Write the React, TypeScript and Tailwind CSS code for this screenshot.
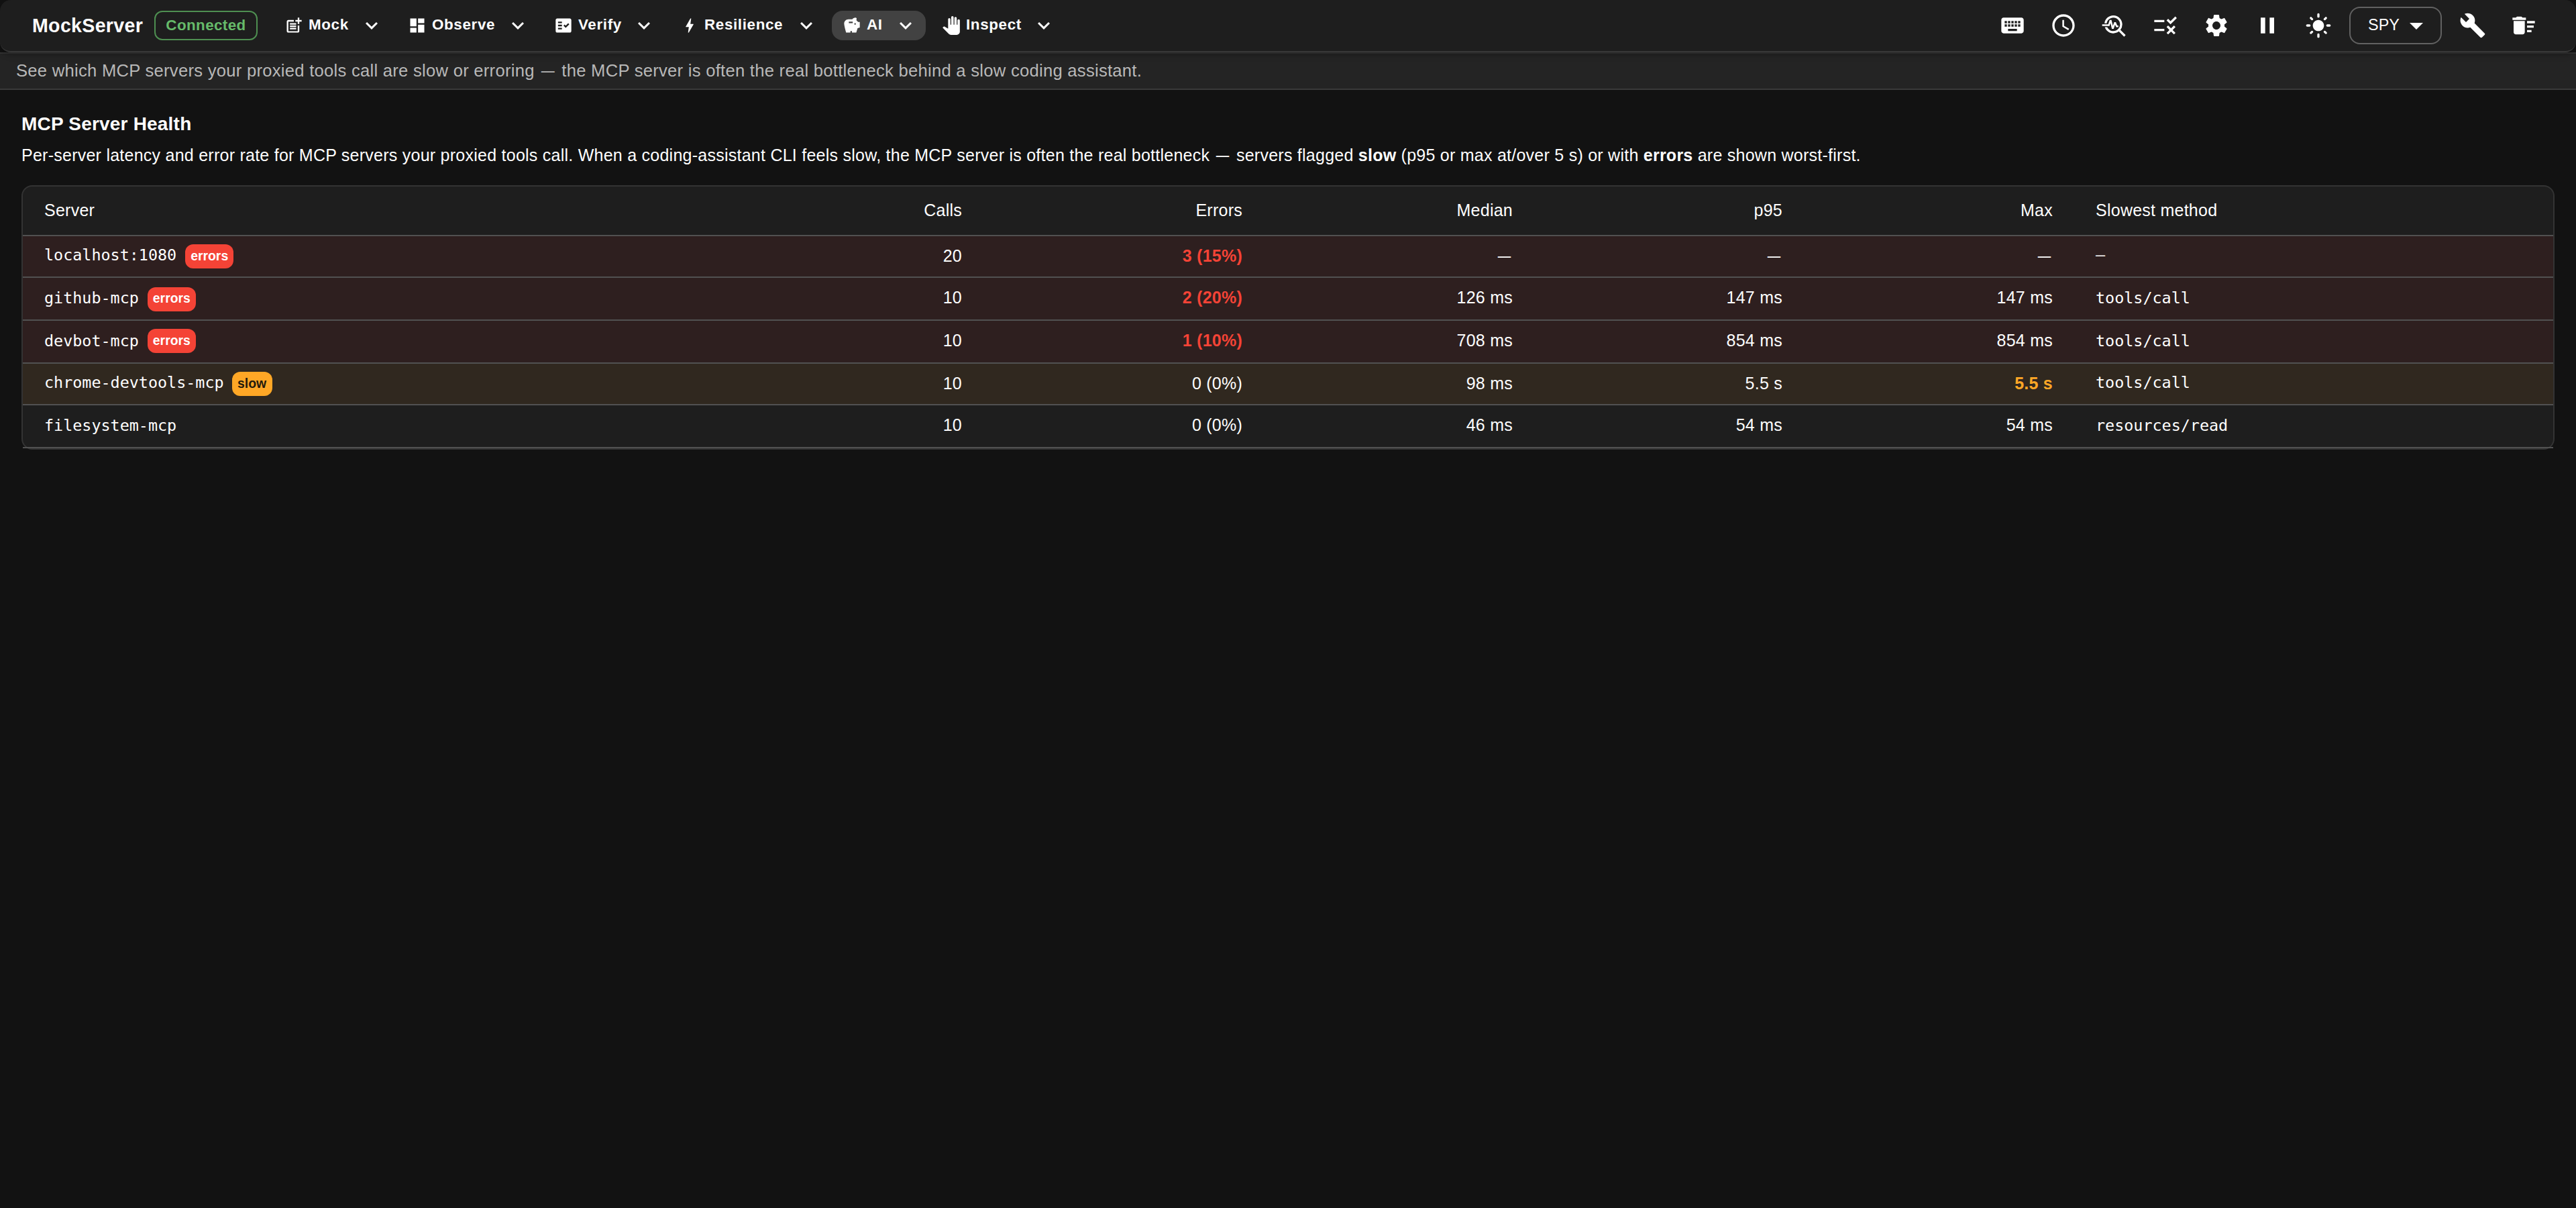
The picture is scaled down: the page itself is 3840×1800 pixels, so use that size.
import type { IconType } from "react-icons"
import {
  MdAccessTime,
  MdArrowDropDown,
  MdBolt,
  MdBuild,
  MdDashboard,
  MdDeleteSweep,
  MdExpandMore,
  MdFactCheck,
  MdKeyboard,
  MdLightMode,
  MdPanTool,
  MdPause,
  MdPostAdd,
  MdRule,
  MdSavings,
  MdSettings,
  MdTroubleshoot,
} from "react-icons/md"

type Row = {
  server: string
  flag?: "errors" | "slow"
  calls: number
  errors: string
  median?: string
  p95?: string
  max?: string
  method: string
  height: string
  monoTop: string
  chip: string
}

const menus: { label: string; icon: IconType; width: string; active?: boolean }[] = [
  { label: "Mock", icon: MdPostAdd, width: "w-[176px]" },
  { label: "Observe", icon: MdDashboard, width: "w-[210px]" },
  { label: "Verify", icon: MdFactCheck, width: "w-[180px]" },
  { label: "Resilience", icon: MdBolt, width: "w-[234px]" },
  { label: "AI", icon: MdSavings, width: "w-[140px]", active: true },
  { label: "Inspect", icon: MdPanTool, width: "w-[198px]" },
]

const actions = [MdKeyboard, MdAccessTime, MdTroubleshoot, MdRule, MdSettings, MdPause, MdLightMode]

const rows: Row[] = [
  { server: "localhost:1080", flag: "errors", calls: 20, errors: "3 (15%)", method: "—", height: "h-[62px]", monoTop: "pt-[12px]", chip: "mt-[12px] leading-[35px]" },
  { server: "github-mcp", flag: "errors", calls: 10, errors: "2 (20%)", median: "126 ms", p95: "147 ms", max: "147 ms", method: "tools/call", height: "h-[64px]", monoTop: "pt-[14px]", chip: "mt-[14px] leading-[32px]" },
  { server: "devbot-mcp", flag: "errors", calls: 10, errors: "1 (10%)", median: "708 ms", p95: "854 ms", max: "854 ms", method: "tools/call", height: "h-[64px]", monoTop: "pt-[14px]", chip: "mt-[12px] leading-[35px]" },
  { server: "chrome-devtools-mcp", flag: "slow", calls: 10, errors: "0 (0%)", median: "98 ms", p95: "5.5 s", max: "5.5 s", method: "tools/call", height: "h-[62px]", monoTop: "pt-[12px]", chip: "mt-[12px] leading-[35px]" },
  { server: "filesystem-mcp", calls: 10, errors: "0 (0%)", median: "46 ms", p95: "54 ms", max: "54 ms", method: "resources/read", height: "h-[64px]", monoTop: "pt-[14px]", chip: "" },
]

const columns = "grid grid-cols-[1014px_418px_418px_403px_402px_403px_1fr]"
const mono = "font-['DejaVu_Sans_Mono',monospace] text-[23.4px] leading-[32px]"

function rowColor(flag?: string) {
  if (flag === "errors") return "bg-[#2e1f1f]"
  if (flag === "slow") return "bg-[#30281f]"
  return ""
}

// em dash with a little air on both sides
function Dash() {
  return <span className="inline-block scale-x-[0.78]">—</span>
}

function Header() {
  return (
    <header className="relative z-10 flex h-[78px] items-start rounded-[16px] border-b-2 border-[#383838] bg-[#1e1e1e] pl-12 shadow-[0_4px_10px_rgba(0,0,0,0.25)]">
      <h1 className="mt-[20px] w-[182px] text-[28.6px] leading-[36px] font-bold tracking-[0.3px] whitespace-nowrap">MockServer</h1>
      <div className="mt-4 flex h-11 w-[154px] items-center justify-center rounded-[12px] border-2 border-[#4e8f51] text-[22.4px] font-bold tracking-[0.4px] text-[#66bb6a]">Connected</div>
      <nav className="mt-4 ml-6 flex gap-2">
        {menus.map(({ label, icon: Icon, width, active }) => (
          <button key={label} className={`${width} flex h-11 items-center rounded-[16px] pr-3 pl-4 ${active ? "bg-[#424242]" : ""}`}>
            <Icon className="size-7" />
            <span className="-mt-[3px] ml-2 text-[22.4px] leading-[36px] font-bold tracking-[0.64px]">{label}</span>
            <MdExpandMore className="ml-auto size-9" />
          </button>
        ))}
      </nav>
      <div className="ml-auto flex h-[76px] items-center pr-[40px]">
        {actions.map((Icon, i) => (
          <button key={i} className="flex w-[76px] justify-center">
            <Icon className="size-10" />
          </button>
        ))}
        <button className="ml-2 flex h-14 w-[138px] items-center rounded-[16px] border-2 border-[#616161] pl-[25px] text-[23.4px]">
          <span className="w-[49px]">SPY</span>
          <MdArrowDropDown className="size-12" />
        </button>
        <button className="ml-2 flex w-[76px] justify-center">
          <MdBuild className="size-10" />
        </button>
        <button className="flex w-[76px] justify-center">
          <MdDeleteSweep className="size-10" />
        </button>
      </div>
    </header>
  )
}

function HealthTable() {
  return (
    <div className="mt-[27px] h-[394px] rounded-[16px] border-2 border-[#333333] bg-[#1e1e1e]">
      <div className={`${columns} h-[74px] border-b-2 border-[#515151] pt-[19px] text-[24.96px] leading-[32px] tracking-[0.27px]`}>
        <div className="pl-8">Server</div>
        <div className="pr-8 text-right">Calls</div>
        <div className="pr-8 text-right">Errors</div>
        <div className="pr-8 text-right">Median</div>
        <div className="pr-8 text-right">p95</div>
        <div className="pr-8 text-right">Max</div>
        <div className="pl-8">Slowest method</div>
      </div>
      {rows.map((r) => (
        <div key={r.server} className={`${columns} ${r.height} ${rowColor(r.flag)} border-b-2 border-[#515151] text-[24.96px] leading-[32px] tracking-[0.27px]`}>
          <div className="flex items-start pl-8">
            <span className={`${mono} ${r.monoTop} tracking-normal`}>{r.server}</span>
            {r.flag === "errors" && <span className={`${r.chip} ml-[13px] flex h-9 w-[72px] justify-center rounded-[12px] bg-[#f44336] text-[19.4px] font-bold tracking-normal`}>errors</span>}
            {r.flag === "slow" && <span className={`${r.chip} ml-[12px] flex h-9 w-[60px] justify-center rounded-[12px] bg-[#ffa726] text-[19.4px] font-bold tracking-normal text-[#231a0c]`}>slow</span>}
          </div>
          <div className="pt-[13px] pr-8 text-right">{r.calls}</div>
          <div className={`pt-[13px] pr-8 text-right ${r.flag === "errors" ? "font-bold text-[#f44336]" : ""}`}>{r.errors}</div>
          <div className="pt-[13px] pr-8 text-right">{r.median ?? <Dash />}</div>
          <div className="pt-[13px] pr-8 text-right">{r.p95 ?? <Dash />}</div>
          <div className={`pt-[13px] pr-8 text-right ${r.flag === "slow" ? "font-bold text-[#ffa726]" : ""}`}>{r.max ?? <Dash />}</div>
          <div className={`${mono} ${r.monoTop} pl-8 tracking-normal`}>{r.method}</div>
        </div>
      ))}
    </div>
  )
}

export default function App() {
  return (
    <div className="h-[1800px] w-[3840px] overflow-hidden bg-[#121212] font-['Liberation_Sans',Arial,sans-serif] text-white">
      <Header />
      <div className="h-[56px] border-t-2 border-b-2 border-t-[#333333] border-b-[#3a3a3a] bg-[#242424] pt-[7px] pl-6 text-[25.6px] leading-[36px] tracking-[0.27px] text-[#b8b8b8]">
        See which MCP servers your proxied tools call are slow or erroring <Dash /> the MCP server is often the real bottleneck behind a slow coding assistant.
      </div>
      <main className="px-8 pt-[33px]">
        <h2 className="text-[28px] leading-[36px] font-bold tracking-[0.2px]">MCP Server Health</h2>
        <p className="mt-[10px] text-[25px] leading-[36px] tracking-[0.25px]">
          Per-server latency and error rate for MCP servers your proxied tools call. When a coding-assistant CLI feels slow, the MCP server is often the real bottleneck <Dash /> servers flagged <b>slow</b> (p95 or max at/over 5 s) or with <b>errors</b> are shown worst-first.
        </p>
        <HealthTable />
      </main>
    </div>
  )
}
